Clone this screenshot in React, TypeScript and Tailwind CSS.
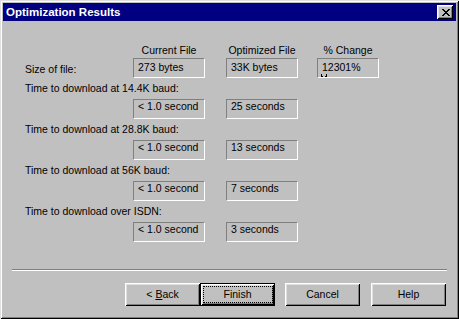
import React from 'react';

const X_PIXELS = [
  'XX....XX',
  '.XX..XX.',
  '..XXXX..',
  '...XX...',
  '..XXXX..',
  '.XX..XX.',
  'XX....XX',
];

function CloseGlyph() {
  return (
    <svg width="8" height="7" viewBox="0 0 8 7" shapeRendering="crispEdges">
      {X_PIXELS.map((row, y) =>
        row.split('').map((c, x) =>
          c === 'X' ? <rect key={`${x}-${y}`} x={x} y={y} width="1" height="1" fill="#000" /> : null
        )
      )}
    </svg>
  );
}

function Field({ className, children }: { className: string; children: React.ReactNode }) {
  return (
    <div
      className={`h-[20px] border border-t-[#808080] border-l-[#808080] border-r-white border-b-white pl-[4px] whitespace-nowrap overflow-hidden ${className}`}
    >
      {children}
    </div>
  );
}

const rows = [
  { label: 'Time to download at 14.4K baud:', cur: '< 1.0 second', opt: '25 seconds' },
  { label: 'Time to download at 28.8K baud:', cur: '< 1.0 second', opt: '13 seconds' },
  { label: 'Time to download at 56K baud:', cur: '< 1.0 second', opt: '7 seconds' },
  { label: 'Time to download over ISDN:', cur: '< 1.0 second', opt: '3 seconds' },
];

const bevel =
  'shadow-[inset_1px_1px_0_#fff,inset_-1px_-1px_0_#000,inset_2px_2px_0_#dfdfdf,inset_-2px_-2px_0_#808080]';

export default function App() {
  return (
    <div className="w-[459px] h-[319px] bg-[#c0c0c0] p-[3px] flex flex-col font-['Liberation_Sans',Arial,sans-serif] text-[10.5px] leading-[13px] text-black shadow-[inset_1px_1px_0_#dfdfdf,inset_-1px_-1px_0_#000,inset_2px_2px_0_#fff,inset_-2px_-2px_0_#808080]">
      {/* Title bar */}
      <div className="h-[18px] bg-[#000080] flex items-center justify-between pl-[3px] pr-[3px]">
        <span className="text-white font-bold text-[11.5px]">Optimization Results</span>
        <div className={`w-[16px] h-[14px] bg-[#c0c0c0] flex items-center justify-center pl-[1px] ${bevel}`}>
          <CloseGlyph />
        </div>
      </div>

      {/* Body */}
      <div className="flex-1 flex flex-col">
        <div className="pl-[22px] flex flex-col">
          {/* Column headers */}
          <div className="mt-[23px] h-[13px] flex">
            <div className="w-[108px]" />
            <div className="w-[72px] text-center">Current File</div>
            <div className="w-[72px] ml-[21px] text-center">Optimized File</div>
            <div className="w-[62px] ml-[19px] text-center">% Change</div>
          </div>

          {/* Size of file */}
          <div className="mt-[1px] flex">
            <div className="w-[108px] pt-[5px]">Size of file:</div>
            <Field className="w-[72px] pt-[2px]">273 bytes</Field>
            <Field className="w-[72px] ml-[21px] pt-[2px]">33K bytes</Field>
            <Field className="w-[62px] ml-[19px] pt-[2px] relative">
              12301%
              <svg className="absolute left-[2px] bottom-0" width="8" height="3" viewBox="0 0 8 3" shapeRendering="crispEdges">
                <rect x="1" y="0" width="1" height="3" fill="#000" />
                <rect x="2" y="2" width="1" height="1" fill="#000" />
                <rect x="6" y="0" width="1" height="3" fill="#000" />
                <rect x="5" y="2" width="1" height="1" fill="#000" />
              </svg>
            </Field>
          </div>

          {/* Download times */}
          {rows.map((r) => (
            <div key={r.label} className="flex flex-col">
              <div className="mt-[4px] h-[13px] whitespace-nowrap">{r.label}</div>
              <div className="mt-[4px] flex pl-[108px]">
                <Field className="w-[72px]">{r.cur}</Field>
                <Field className="w-[72px] ml-[21px]">{r.opt}</Field>
              </div>
            </div>
          ))}
        </div>

        {/* Footer */}
        <div className="mt-auto pb-[10px]">
          <div className="mx-[9px] border-t border-t-[#808080] border-b border-b-white" />
          <div className="mt-[12px] flex justify-end pr-[10px]">
            <div className={`w-[75px] h-[23px] flex items-center justify-center ${bevel}`}>
              &lt; <span className="underline underline-offset-[1px] ml-[3px]">B</span>ack
            </div>
            <div className="w-[75px] h-[23px] border border-black">
              <div className={`relative h-full flex items-center justify-center ${bevel}`}>
                Finish
                <div className="absolute left-[2px] right-[1px] top-[2px] bottom-[2px] border border-dotted border-black" />
              </div>
            </div>
            <div className={`w-[75px] h-[23px] ml-[10px] flex items-center justify-center ${bevel}`}>Cancel</div>
            <div className={`w-[75px] h-[23px] ml-[11px] flex items-center justify-center ${bevel}`}>Help</div>
          </div>
        </div>
      </div>
    </div>
  );
}
